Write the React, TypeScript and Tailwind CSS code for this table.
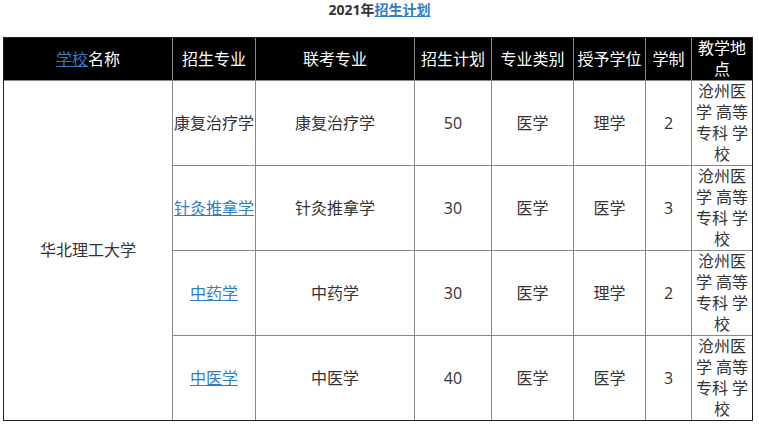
import React from 'react';

const font = { fontFamily: '"Open Sans", "Noto Sans CJK SC", sans-serif' };

const rows = [
  { major: '康复治疗学', link: false, exam: '康复治疗学', plan: '50', type: '医学', degree: '理学', years: '2' },
  { major: '针灸推拿学', link: true, exam: '针灸推拿学', plan: '30', type: '医学', degree: '医学', years: '3' },
  { major: '中药学', link: true, exam: '中药学', plan: '30', type: '医学', degree: '理学', years: '2' },
  { major: '中医学', link: true, exam: '中医学', plan: '40', type: '医学', degree: '医学', years: '3' },
];

const App = () => {
  return (
    <div className="min-h-screen bg-white text-[#333]" style={font}>
      <p className="text-center text-[14px] leading-[20px] font-bold text-[#333]">
        2021年<a href="#" className="text-[#2f7dc6] underline">招生计划</a>
      </p>

      <div className="mt-[17px] ml-[3px] w-[750px] border border-[#222]">
        <table className="w-[748px] table-fixed border-separate border-spacing-0 text-[16px] leading-[21px]">
          <thead>
            <tr className="bg-black text-white">
              <th className="w-[169px] border-r border-b border-[#888] font-normal text-center p-0">
                <a href="#" className="text-[#2f7dc6] underline">学校</a>名称
              </th>
              <th className="w-[83px] border-r border-b border-[#888] font-normal text-center p-0">招生专业</th>
              <th className="w-[159px] border-r border-b border-[#888] font-normal text-center p-0">联考专业</th>
              <th className="w-[77px] border-r border-b border-[#888] font-normal text-center p-0">招生计划</th>
              <th className="w-[82px] border-r border-b border-[#888] font-normal text-center p-0">专业类别</th>
              <th className="w-[72px] border-r border-b border-[#888] font-normal text-center p-0">授予学位</th>
              <th className="w-[46px] border-r border-b border-[#888] font-normal text-center p-0">学制</th>
              <th className="w-[60px] border-b border-[#888] font-normal text-center px-[2px] py-0">教学地点</th>
            </tr>
          </thead>
          <tbody>
            {rows.map((r, i) => {
              const last = i === rows.length - 1;
              const cell = last
                ? 'border-r border-[#888] text-center align-middle p-0'
                : 'border-r border-b border-[#888] text-center align-middle p-0';
              return (
                <tr key={i}>
                  {i === 0 && (
                    <td rowSpan={4} className="border-r border-[#888] text-center align-middle p-0">
                      华北理工大学
                    </td>
                  )}
                  <td className={cell}>
                    {r.link ? (
                      <a href="#" className="text-[#2f7dc6] underline">{r.major}</a>
                    ) : (
                      r.major
                    )}
                  </td>
                  <td className={cell}>{r.exam}</td>
                  <td className={cell}>{r.plan}</td>
                  <td className={cell}>{r.type}</td>
                  <td className={cell}>{r.degree}</td>
                  <td className={cell}>{r.years}</td>
                  <td
                    className={
                      last
                        ? 'text-center align-middle px-[2px] py-0'
                        : 'border-b border-[#888] text-center align-middle px-[2px] py-0'
                    }
                  >
                    沧州医学 高等专科 学校
                  </td>
                </tr>
              );
            })}
          </tbody>
        </table>
      </div>
    </div>
  );
};

export default App;
